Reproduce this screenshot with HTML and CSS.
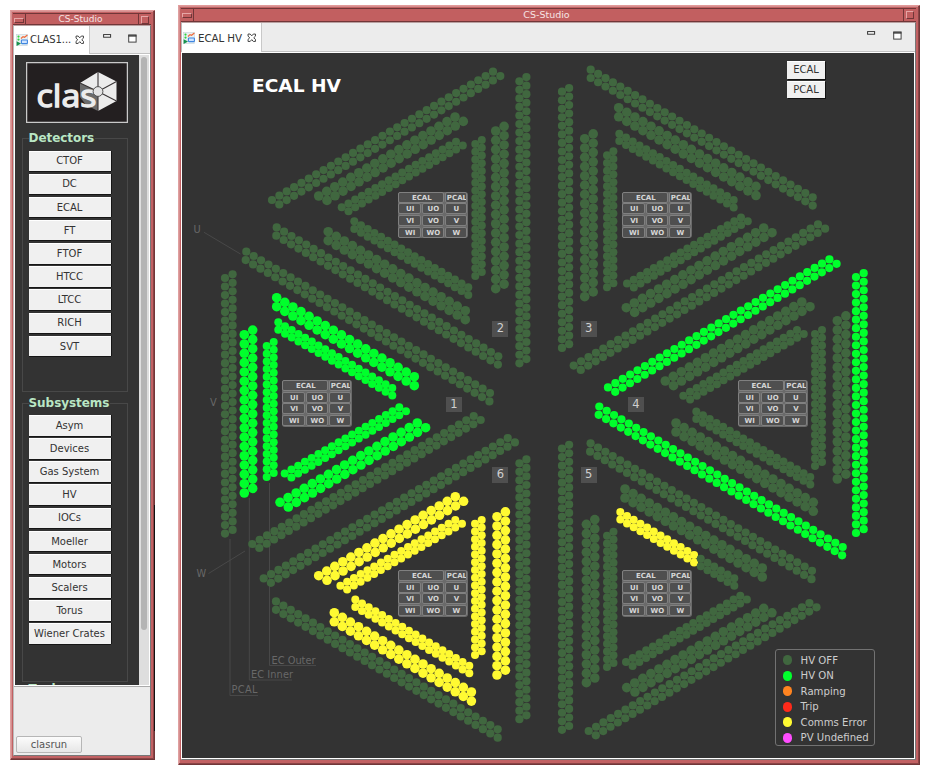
FILE: index.html
```html
<!DOCTYPE html>
<html lang="en">
<head>
<meta charset="utf-8">
<title>CS-Studio</title>
<link rel="stylesheet" href="styles.css">
</head>
<body>
<svg width="0" height="0" class="defs" aria-hidden="true">
  <defs>
    <symbol id="opi" viewBox="0 0 12 12">
      <rect x="0.5" y="0.5" width="11" height="11" fill="#e9f1f2" stroke="#c5d3da" stroke-width=".6"/>
      <circle cx="2.5" cy="2.6" r="1.1" fill="#2fd23f"/><circle cx="2.5" cy="5.6" r="1.1" fill="#2fd23f"/>
      <path d="M5 4.5L7 2.6L8.6 3.3L11.4 1" fill="none" stroke="#f06a3c" stroke-width="1.2"/>
      <rect x="5.4" y="6" width="6" height="3.6" rx=".6" fill="#cfe4ff" stroke="#3f86e0" stroke-width="1.1"/>
      <path d="M.6 7.2L5 9.5L.6 12z" fill="#17914c"/>
    </symbol>
    <symbol id="close" viewBox="0 0 9 9">
      <path d="M1 1H3L4.5 2.7L6 1H8V3L6.4 4.5L8 6V8H6L4.5 6.3L3 8H1V6L2.6 4.5L1 3z" fill="#fff" stroke="#3c3c3c" stroke-width=".9"/>
    </symbol>
    <symbol id="min" viewBox="0 0 9 4"><rect x=".6" y=".6" width="7" height="2.6" fill="#fff" stroke="#333" stroke-width="1"/></symbol>
    <symbol id="max" viewBox="0 0 9 9"><rect x=".7" y=".9" width="7.4" height="7.2" fill="#fff" stroke="#444" stroke-width="1"/><path d="M.4 1.9H8.4" stroke="#333" stroke-width="1.4"/></symbol>
  </defs>
</svg>

<section class="window launcher">
  <header class="titlebar"><i class="knob dash"></i><span>CS-Studio</span><i class="knob box"></i></header>
  <div class="pane">
    <div class="tabs">
      <div class="tab"><svg class="ic"><use href="#opi"/></svg><span>CLAS1...</span><svg class="x"><use href="#close"/></svg></div>
      <div class="tools"><svg class="mn"><use href="#min"/></svg><svg class="mx"><use href="#max"/></svg></div>
    </div>
    <div class="scroller">
      <div class="menu">
        <svg class="logo" viewBox="0 0 102 61">
          <rect x=".6" y=".6" width="100.8" height="59.8" fill="#231f20" stroke="#c9c9c9" stroke-width="1.3"/>
          <path d="M54 21L72 29.500V49L60 43L54 35z" fill="#6b6b6b"/>
          <path d="M72 10L90.500 19.500V39L72 49V29.500L54 21z" fill="#ececec"/>
          <path d="M72 10V29.500M90.500 19.500L72 29.500M90.500 39L72 29.500M72 49V29.500M54 21L72 29.500" stroke="#3a3637" stroke-width="1.1"/>
          <text x="10.500" y="45" textLength="60" lengthAdjust="spacingAndGlyphs">clas</text>
          <circle cx="72" cy="29.500" r="4.900" fill="#e4e4e4" stroke="#444" stroke-width=".9"/>
        </svg>
        <div class="group detectors"><h2>Detectors</h2>
          <button>CTOF</button><button>DC</button><button>ECAL</button><button>FT</button><button>FTOF</button><button>HTCC</button><button>LTCC</button><button>RICH</button><button>SVT</button>
        </div>
        <div class="group subsystems"><h2>Subsystems</h2>
          <button>Asym</button><button>Devices</button><button>Gas System</button><button>HV</button><button>IOCs</button><button>Moeller</button><button>Motors</button><button>Scalers</button><button>Torus</button><button>Wiener Crates</button>
        </div>
        <div class="group more"><h2>Tools</h2></div>
      </div>
      <div class="bar"><i></i></div>
    </div>
    <div class="status"><button class="user">clasrun</button></div>
  </div>
</section>

<section class="window main">
  <header class="titlebar"><i class="knob dash"></i><span>CS-Studio</span><i class="knob box"></i></header>
  <div class="pane">
    <div class="tabs">
      <div class="tab"><svg class="ic"><use href="#opi"/></svg><span>ECAL HV</span><svg class="x"><use href="#close"/></svg></div>
      <div class="tools"><svg class="mn"><use href="#min"/></svg><svg class="mx"><use href="#max"/></svg></div>
    </div>
    <div class="canvas" id="canvas">
      <svg class="map" viewBox="182 53 732 705" width="732" height="705">
        <g class="guides">
          <path d="M204 232.300L240.500 254M208.500 573.500L245 551M230 539V695.500H258M249.300 498V680H292M269.500 483V665.500H316"/>
        </g>
        <g class="notes">
          <text x="193.500" y="232.500">U</text><text x="210" y="406">V</text><text x="196.500" y="576.500">W</text>
          <text x="271.500" y="663.500" textLength="44">EC Outer</text>
          <text x="251" y="677.500" textLength="42">EC Inner</text>
          <text x="231.500" y="693" textLength="26">PCAL</text>
        </g>
        <g id="dots"></g>
        <text class="heading" x="252" y="92" textLength="89" lengthAdjust="spacingAndGlyphs">ECAL HV</text>
      </svg>
      <div class="views"><button>ECAL</button><button>PCAL</button></div>
      <ul class="legend">
        <li><i class="off"></i>HV OFF</li><li><i class="on"></i>HV ON</li><li><i class="ramp"></i>Ramping</li><li><i class="trip"></i>Trip</li><li><i class="comms"></i>Comms Error</li><li><i class="undef"></i>PV Undefined</li>
      </ul>
    </div>
  </div>
</section>
<script src="app.js"></script>
</body>
</html>
```
FILE: styles.css
```css
* { box-sizing: border-box; }
body { margin: 0; width: 933px; height: 775px; position: relative; overflow: hidden; background: #fff; font-family: "DejaVu Sans", sans-serif; color: #333; }
.defs { position: absolute; }
button { font: 10px "DejaVu Sans", sans-serif; color: #333; padding: 0; border: 0; }

.window { position: absolute; display: flex; flex-direction: column; background: #c26163; border: 1px solid #713638; border-top-color: #e29a9a; border-left-color: #e0a0a0; box-shadow: inset -1px -1px 0 #8a4546, inset 1px 1px 0 #d58f8f; }
.launcher { left: 10px; top: 10px; width: 145px; height: 750px; padding: 2px 3px 3px 2px; }
.launcher::after { content: ""; position: absolute; right: -1px; top: 494px; width: 1px; height: 226px; background: #111; }
.main { left: 178px; top: 5px; width: 742px; height: 760px; padding: 2px 3px 4px 2px; }
.titlebar { height: 12px; display: flex; align-items: center; justify-content: space-between; background: #c25f60; border-top: 1px solid #713638; border-bottom: 1px solid #713638; color: #f6e4e4; font-size: 9px; line-height: 10px; flex: none; }
.launcher .titlebar span { margin-right: 3px; }
.main .titlebar { height: 14px; font-size: 9.500px; }
.main .titlebar span { margin-right: 4px; }
.knob { width: 13px; height: 100%; position: relative; }
.dash { border-right: 1px solid #713638; }
.box { border-left: 1px solid #713638; }
.knob::after { content: ""; display: block; border: 1px solid #e6a6a6; border-right-color: #713638; border-bottom-color: #713638; margin: 2px auto; width: 6px; height: 6px; }
.dash::after { height: 3px; width: 8px; margin-top: 4px; }
.pane { flex: 1; min-height: 0; display: flex; flex-direction: column; background: #ececec; border: 1px solid #777; border-top: 1px solid #b9a0a0; border-left-color: #bbb; }
.tabs { display: flex; justify-content: space-between; background: #ececec; border-bottom: 1px solid #c2c2c2; flex: none; }
.tab { background: #fff; display: flex; align-items: center; border-right: 1px solid #c8c8c8; white-space: nowrap; margin-bottom: -1px; }
.ic { width: 12px; height: 12px; }
.x { width: 9.500px; height: 9.500px; }
.mn { width: 9px; height: 4px; }
.mx { width: 9px; height: 9px; }
.tools { display: flex; }
.launcher .tabs { height: 28px; }
.launcher .tab { width: 76px; padding: 0 0 1px 2px; font-size: 10px; }
.launcher .tab span { margin: 0 4px 0 2px; letter-spacing: -.1px; }
.launcher .tools { gap: 16px; padding: 8px 13px 0 0; }

.scroller { display: flex; height: 633px; background: #fff; padding: 1px 2px 1px 1px; border-bottom: 1px solid #aaa; flex: none; }
.menu { width: 124px; background: #333; overflow: hidden; padding: 7px 10px 0 7px; height: 630px; display: flex; flex-direction: column; flex: none; }
.logo { width: 102px; height: 61px; margin-left: 3.500px; flex: none; }
.logo text { font: 31px "Open Sans", sans-serif; fill: #ececec; stroke: #ececec; stroke-width: 1.3; }
.group { border: 1px solid #484848; width: 106px; padding-left: 5.500px; flex: none; }
.group h2 { margin: -8px 0 4.500px 0; width: max-content; padding: 0 1px 0 0; font-size: 12px; line-height: 15px; background: #333; color: #b9e6c4; letter-spacing: -.05px; }
.group button { display: block; width: 82px; height: 20.500px; margin-bottom: 2.670px; background: #f0f0f0; box-shadow: 0 1px 0 #161616, 1px 0 0 #161616, inset 0 1px 0 #fff; }
.detectors { margin-top: 15px; height: 254px; }
.subsystems { margin-top: 10.500px; height: 279px; }
.more { margin-top: 7.500px; height: 60px; }
.bar { flex: 1; background: #dedede; padding: 2px 2px 0 2px; }
.bar i { display: block; width: 5.500px; height: 573px; border-radius: 3px; background: #b4b4b4; }
.status { flex: 1; padding: 49px 0 0 2px; }
.user { width: 66px; height: 17px; border: 1px solid #b6b6b6; border-radius: 2px; background: linear-gradient(#fcfcfc, #e6e6e6); color: #555; display: block; }

.main .tabs { height: 29px; }
.main .tab { width: 80px; padding: 0 0 0 1px; font-size: 10.300px; }
.main .tab span { margin: 0 5px 0 3px; letter-spacing: -.1px; }
.main .tools { gap: 17px; padding: 8px 13px 0 0; }
.canvas { position: relative; margin: 1px 0 0; width: 732px; height: 705px; background: #333; box-shadow: 0 0 0 1px #fff; flex: none; }
.map { display: block; }
.heading { font: bold 18px "DejaVu Sans", sans-serif; fill: #fff; }
.guides path { fill: none; stroke: #484848; stroke-width: 1; }
.notes text { font-size: 9.800px; fill: #686868; }
.views { position: absolute; left: 605px; top: 8px; width: 38px; display: flex; flex-direction: column; gap: 2px; }
.views button { height: 17.500px; background: #f0f0f0; box-shadow: 1px 1px 0 #111, inset 0 1px 0 #fff; font-size: 10px; }
.legend { position: absolute; left: 593px; top: 596px; width: 100px; height: 97px; margin: 0; padding: 2.500px 0 0 7px; list-style: none; border: 1px solid #727272; border-radius: 3px; font-size: 10.150px; color: #cdcdcd; }
.legend li { display: flex; align-items: center; height: 15.500px; white-space: nowrap; }
.legend i { width: 9.600px; height: 9.600px; border-radius: 50%; margin: 0 8.500px 0 -.5px; }
.off { background: #40673f; fill: #40673f; }
.on { background: #00ff2c; fill: #00ff2c; }
.ramp { background: #ff8420; }
.trip { background: #ff2a1a; }
.comms { background: #fffa32; fill: #fffa32; }
.undef { background: #ff4dff; }

.switches { position: absolute; width: 70px; height: 46.500px; display: grid; grid-template-columns: 22.700px 22.700px 22.200px; grid-template-rows: repeat(4, 11px); gap: .6px; padding: .3px; border-radius: 3px; background: #6a6a6a; }
.switches b { border: 1px solid #808080; background: #4f4f4f; color: #d6d6d6; font-size: 7px; line-height: 10px; text-align: center; border-radius: 2px; overflow: hidden; padding-left: 1px; white-space: nowrap; }
.switches b:first-child { grid-column: span 2; }
.sector { position: absolute; width: 16px; height: 15.500px; background: #4f4f4f; color: #d0d0d0; font-size: 11.500px; line-height: 15px; text-align: center; }
```
FILE: app.js
```js
// Each strip is two staggered rows of channels:
// [kind, state, row A start x,y, row A end x,y, row B offset x,y]
const strips = [
  // sector 1
  ["p","off",225,278,225,533.6,7.6,-3.7],["l","on",244.3,334.7,244.3,493,8.4,-4.6],["s","on",266.7,346,266.7,477,7,-4],
  ["p","off",246.3,251.7,490,393,-.6,8.4],["l","on",276.7,297.7,414.3,376.7,0,9],["s","on",278.3,322.3,392.3,388,0,7.5],
  ["p","off",252.3,544,473.7,416,7,4],["l","on",280,502.3,417.3,423,8.3,4.7],["s","on",284.7,473.5,399.3,407.3,6.7,4],
  // sector 2
  ["p","off",519.4,81.3,519.4,363.3,7,-4.2],["l","off",495.7,131,495.7,288.7,8.4,-4.6],["s","off",475.3,144,475.3,276,6.5,-4],
  ["p","off",272,200,493,71.7,7.3,4.4],["l","off",318.7,196,455,117,8.3,4.4],["s","off",341.7,207.3,456,141.7,6.8,3.9],
  ["p","off",276.7,227.4,498.3,356.3,-.4,8.3],["l","off",328.2,231.7,465.3,310.7,0,9],["s","off",354.3,221.3,468.3,287.3,0,7.6],
  // sector 3
  ["p","off",562,91.7,562,347.9,7.1,-3.7],["l","off",584.7,138.7,584.7,296.7,8.5,-4.8],["s","off",607,155.3,607,287.3,6.4,-4],
  ["p","off",590.7,69.7,812.7,197.3,0,8.3],["l","off",618.7,107.7,756,186.4,0,9.1],["s","off",619.3,133.7,733.7,200,0,7.4],
  ["p","off",573.7,365.6,818,224.4,7.1,4.3],["l","off",626.3,307.7,763.7,228,8.3,4.7],["s","off",627,283.6,741,217.4,6.8,3.8],
  // sector 4
  ["p","on",856,277,856,533,7.7,-3.8],["l","off",837.3,320.7,837.3,479,8.6,-4.8],["s","off",815,334,815,466,7,-4],
  ["p","on",608,387.4,829.4,259.4,7.2,4.4],["l","off",665.3,381,801.8,302,8.2,4.7],["s","off",683.3,395.7,797,330,6.8,3.9],
  ["p","on",599.3,406.5,842.7,547,-.6,8.3],["l","off",676,423,813.3,502.3,0,9],["s","off",696.3,411.4,810.3,477,0,7.6],
  // sector 5
  ["p","off",562,448.6,562,729.8,7.1,-3.8],["l","off",586.4,524.3,586.4,682.7,8.4,-4.7],["s","off",607,535.8,607,667,6.5,-4],
  ["p","off",590.6,443.3,812,570.8,-.5,8.4],["l","off",625,489,762.3,568,0,9],["s","mixed",620.3,512,734.3,578.3,0,7.5],
  ["p","off",588.7,731,809.4,603,7.1,4.3],["l","off",626.7,687.6,763.7,608.4,8.2,4.4],["s","off",626,662,740.3,595.7,6.6,3.9],
  // sector 6
  ["p","off",519.4,463.3,519.4,719.2,7,-3.9],["l","comms",497,516.7,497,675,8.4,-4.8],["s","comms",475,523.7,475,655,6.7,-3.8],
  ["p","off",263.7,578.4,507.7,438,7.2,4.4],["l","comms",318.7,575.7,455.3,496.7,8.3,4.6],["s","comms",340.4,585.7,455.3,520,6.7,3.7],
  ["p","off",276,601.4,497.7,729.3,0,8.4],["l","comms",334.3,612.7,471.4,692,0,9.1],["s","comms",355.3,599.5,469.3,665.8,0,7.5]
];
const radius = { p: 4.1, l: 4.8, s: 4 };
const NS = "http://www.w3.org/2000/svg";
const dots = document.getElementById("dots");
for (const [kind, state, x0, y0, x1, y1, dx, dy] of strips) {
  const steps = kind === "p" ? Math.round(Math.hypot(x1 - x0, y1 - y0) / 8.54) : 17;
  for (let i = 0; i <= steps; i++) {
    for (let row = 0; row < 2; row++) {
      const c = document.createElementNS(NS, "circle");
      c.setAttribute("cx", (x0 + (x1 - x0) * i / steps + row * dx).toFixed(2));
      c.setAttribute("cy", (y0 + (y1 - y0) * i / steps + row * dy).toFixed(2));
      c.setAttribute("r", radius[kind]);
      c.setAttribute("class", state === "mixed" ? (i < 12 ? "comms" : "off") : state);
      dots.appendChild(c);
    }
  }
}

const canvas = document.getElementById("canvas");
function place(cls, x, y) {
  const el = document.createElement("div");
  el.className = cls;
  el.style.left = (x - 182) + "px";
  el.style.top = (y - 53) + "px";
  canvas.appendChild(el);
  return el;
}
for (const [x, y] of [[282, 380], [398, 191.500], [622, 191.500], [737.500, 380], [622, 570], [398, 570]]) {
  place("switches", x, y).innerHTML = ["ECAL", "PCAL", "UI", "UO", "U", "VI", "VO", "V", "WI", "WO", "W"].map(t => `<b>${t}</b>`).join("");
}
[[446, 396.700], [492.300, 321.300], [580.700, 321.300], [628, 396.700], [580.700, 467], [492.300, 467]].forEach(([x, y], i) => {
  place("sector", x, y).textContent = i + 1;
});
```
